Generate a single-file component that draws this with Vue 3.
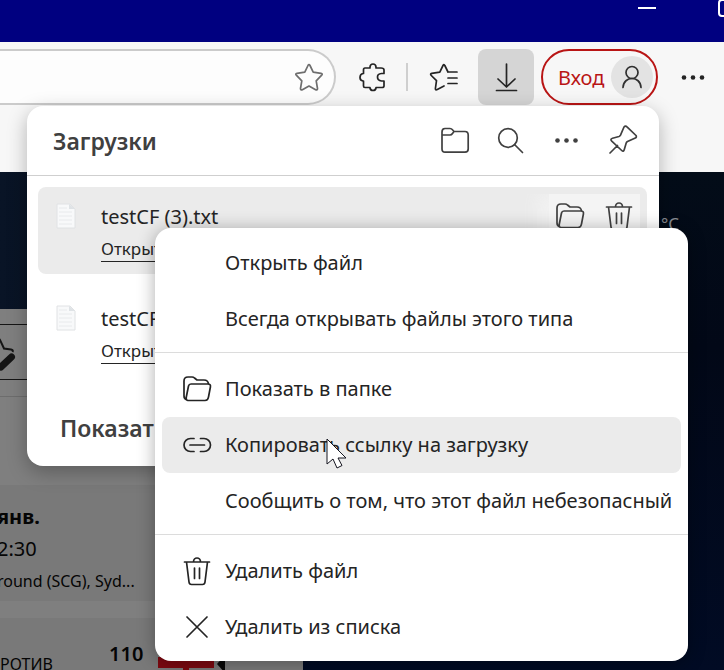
<script setup>
const files = [
  { name: 'testCF (3).txt', active: true },
  { name: 'testCF (2).txt', active: false }
]
const groups = [
  [
    { label: 'Открыть файл', icon: '' },
    { label: 'Всегда открывать файлы этого типа', icon: '' }
  ],
  [
    { label: 'Показать в папке', icon: 'folder' },
    { label: 'Копировать ссылку на загрузку', icon: 'link', hover: true },
    { label: 'Сообщить о том, что этот файл небезопасный', icon: '' }
  ],
  [
    { label: 'Удалить файл', icon: 'trash' },
    { label: 'Удалить из списка', icon: 'close' }
  ]
]
const paths = {
  folder: 'M4 25 Q1 24 1 21 V6 Q1 2 5 2 H9 Q10.500 2 11.500 3 L14 5 H21 Q25 5 25.500 9 M8 9 H25 Q28 9 27.400 12 L25.500 22 Q25 25.500 22 25.500 H5 Q2.800 25.500 3.300 22 L5.500 11 Q6 9 8 9 Z',
  link: 'M11 7.500 H7.500 A6.500 6.500 0 0 0 7.500 20.500 H11 M17.500 7.500 H21 A6.500 6.500 0 0 1 21 20.500 H17.500 M7 14 H21.500',
  trash: 'M1.500 5 H26.500 M3.500 5 L6 25 Q6.300 27.500 8.500 27.500 H19.500 Q21.700 27.500 22 25 L24.500 5 M10.500 5 A3.500 4 0 0 1 17.500 5 M11.500 11 V21.500 M16.500 11 V21.500',
  close: 'M4 4 L24 24 M24 4 L4 24'
}
</script>

<template>
  <div class="window">
    <header class="titlebar">
      <button class="caption" aria-label="Свернуть"><svg width="18" height="16" viewBox="0 0 18 16"><path d="M0 8 H18" /></svg></button>
      <button class="caption" aria-label="Развернуть"><svg width="18" height="18" viewBox="0 0 18 18"><rect x="1" y="0" width="16" height="16" rx="3" /></svg></button>
    </header>

    <nav class="toolbar">
      <div class="address">
        <input type="text" aria-label="Адресная строка" />
        <button class="plain" aria-label="Добавить в избранное">
          <svg class="icon muted" viewBox="0 0 28 28"><path d="M13 2.500 Q14 0.500 15 2.500 L18.200 9.200 L26 10.300 Q28 10.800 26.700 12.200 L21.200 17.800 L22.500 25.500 Q22.500 27.500 20.600 26.700 L14 23 L7.400 26.700 Q5.500 27.500 5.500 25.500 L6.800 17.800 L1.300 12.200 Q0 10.800 2 10.300 L9.800 9.200 Z" /></svg>
        </button>
      </div>
      <button class="tool" aria-label="Расширения">
        <svg class="icon" viewBox="0 0 28 28"><path d="M6 5 H11 V4 Q11.300 1 14 1 Q16.700 1 17 4 V5 H22 Q25 5 25 7 V10.500 H22.500 Q18.500 10.800 18.500 14 Q18.500 17.500 22.500 18 H25 V23 Q25 24.500 23 24.500 H17 V25 Q16.500 27.500 14 27.500 Q11.500 27.500 11 25 V24.500 H6 Q4.500 24.500 4.500 23 V18 H4 Q1 17.500 1 14.500 Q1 11 4 10.500 H4.500 V7 Q4.500 5 6 5 Z" /></svg>
      </button>
      <span class="divider"></span>
      <button class="tool" aria-label="Избранное">
        <svg class="icon" viewBox="0 0 28 28"><path d="M18 9 L14.800 2.500 Q14 0.500 13 2.500 L9.800 9.200 L1.800 10.400 Q-0.300 11 1.300 12.500 L6.500 17.600 L5.400 25.500 Q5.300 27.500 7.300 26.500 L14 23 M18 9 H27 M18 15 H27 M18 20.500 H27" /></svg>
      </button>
      <button class="tool pressed" aria-label="Загрузки">
        <svg class="icon" viewBox="0 0 28 28"><path d="M14.500 1 V23 M6 16 L14.500 24 L23 16 M4.500 27.500 H24.500" /></svg>
      </button>
      <button class="login">Вход
        <span class="avatar"><svg class="icon" viewBox="0 0 28 28"><circle cx="14" cy="9.500" r="6" /><path d="M5 24.500 C5.500 12.500 22.500 12.500 23 24.500" /></svg></span>
      </button>
      <button class="tool" aria-label="Настройки и другое">
        <svg class="icon dots" viewBox="0 0 28 28"><circle cx="5" cy="14.500" r="2.300" /><circle cx="14" cy="14.500" r="2.300" /><circle cx="23" cy="14.500" r="2.300" /></svg>
      </button>
    </nav>

    <main class="page">
      <div class="hero"><span>°C</span></div>
      <section class="feed">
        <div class="edit">
          <svg width="24" height="52" viewBox="0 0 24 52"><path class="star" d="M-2 12 L0 15 L4 23.500 L11 24.500 Q13.500 25 12.500 27" /><path class="pen" d="M1 42 L11.500 32" /></svg>
        </div>
        <article class="banner"></article>
        <article class="match">
          <strong>янв.</strong>
          <span>2:30</span>
          <small>round (SCG), Syd...</small>
        </article>
        <article class="score">
          <small>РОТИВ</small>
          <strong>110</strong>
          <svg class="flag" width="70" height="24" viewBox="0 0 70 24"><path class="red" d="M0 0 H56 V11 H31 V24 H25 V11 H0 Z M0 14 H22 V24 H0 Z M34 14 H56 V24 H34 Z" /><path class="tip" d="M59 7 L67 -2 V16 Z" /></svg>
        </article>
      </section>
    </main>

    <section class="popup">
      <header class="popup-head">
        <h1>Загрузки</h1>
        <button class="tool" aria-label="Открыть папку загрузок">
          <svg class="icon" viewBox="0 0 28 28"><path d="M4 1.500 H9 Q10.500 1.500 11.500 2.800 L13 4.500 H24 Q27.200 4.500 27.200 8 V22 Q27.200 25.200 24 25.200 H4 Q1 25.200 1 22 V5 Q1 1.500 4 1.500 Z M1 8 H9 Q10.500 8 11.500 6.500 L13 4.500" /></svg>
        </button>
        <button class="tool" aria-label="Поиск">
          <svg class="icon" viewBox="0 0 28 28"><circle cx="11" cy="11" r="9.300" /><path d="M17.500 17.500 L25.500 25.500" /></svg>
        </button>
        <button class="tool" aria-label="Дополнительно">
          <svg class="icon dots" viewBox="0 0 28 28"><circle cx="4.500" cy="13.500" r="2.300" /><circle cx="13.500" cy="13.500" r="2.300" /><circle cx="22.500" cy="13.500" r="2.300" /></svg>
        </button>
        <button class="tool" aria-label="Закрепить">
          <svg class="icon" viewBox="0 0 28 28"><path d="M1 26 L8.500 18.500 M15 0 Q16.500 -1.800 18 -0.200 L27 8.500 Q28 10.200 26.300 11 L18.500 14.500 Q17.500 15 17.200 16 L15.300 22.500 Q14.500 25.200 12.700 23.500 L2.500 13.800 Q1 12 3.500 11.200 L10 9.500 Q11 9.200 11.500 8.200 Z" /></svg>
        </button>
      </header>
      <ul class="files">
        <li v-for="file in files" :key="file.name" class="file" :class="{ active: file.active }">
          <svg class="doc" width="22" height="28" viewBox="0 0 22 28"><path class="sheet" d="M2 2 H15 L20 7 V26 H2 Z" /><path class="fold" d="M14 2 V7 H20 Z" /><path class="lines" d="M4 6 H12 M4 10 H17 M4 14 H17 M4 18 H17 M4 22 H17" /></svg>
          <div class="info">
            <span>{{ file.name }}</span>
            <a href="#">Открыть файл</a>
          </div>
          <div v-if="file.active" class="actions">
            <button class="plain" aria-label="Показать в папке"><svg class="icon" viewBox="0 0 28 28"><path :d="paths.folder" /></svg></button>
            <button class="plain" aria-label="Удалить файл"><svg class="icon" viewBox="0 0 28 28"><path :d="paths.trash" /></svg></button>
          </div>
        </li>
      </ul>
      <a class="more" href="#">Показать еще</a>
    </section>

    <div class="menu" role="menu">
      <div v-for="(group, i) in groups" :key="i" class="group">
        <button v-for="item in group" :key="item.label" class="item" :class="{ hover: item.hover }" role="menuitem">
          <svg class="icon" viewBox="0 0 28 28"><path v-if="item.icon" :d="paths[item.icon]" /></svg>
          <span>{{ item.label }}</span>
        </button>
      </div>
    </div>

    <svg class="cursor" width="22" height="32" viewBox="0 0 22 32"><path d="M1 2 V27 L7 22 L11 31 L16 28.500 L12 21 H20 Z" /></svg>
  </div>
</template>

<style>
body { overflow: hidden; }
</style>

<style scoped>
* { box-sizing: border-box; }
.window {
  position: relative;
  display: flex;
  flex-direction: column;
  height: 100vh;
  overflow: hidden;
  font-family: "Noto Sans", "Open Sans", sans-serif;
  font-size: 20px;
  color: #242424;
}
button { border: 0; padding: 0; background: none; font: inherit; color: inherit; }
a { color: inherit; text-decoration: none; }
.icon {
  display: block;
  flex: none;
  width: 28px;
  height: 28px;
  fill: none;
  stroke: currentColor;
  stroke-width: 1.7;
  stroke-linecap: round;
  stroke-linejoin: round;
  overflow: visible;
}
.dots { fill: currentColor; stroke: none; }
.plain { display: flex; align-items: center; justify-content: center; }
.muted { color: #6e6e6e; }

.titlebar {
  display: flex;
  justify-content: flex-end;
  flex: none;
  gap: 62px;
  height: 42px;
  margin-right: -12px;
  background: #000080;
}
.caption { height: 16px; }
.caption svg { display: block; fill: none; stroke: #fff; stroke-width: 2; }

.toolbar {
  display: flex;
  flex: none;
  height: 130px;
  padding: 7px 3px 0 0;
  background: #f7f7f7;
}
.address {
  display: flex;
  flex: 1;
  min-width: 0;
  height: 56px;
  margin-right: 9px;
  padding-right: 11px;
  border: 2px solid #cbcbcb;
  border-left: 0;
  border-radius: 0 28px 28px 0;
  background: #fdfdfd;
}
.address input { flex: 1; min-width: 0; border: 0; background: none; outline: 0; font: inherit; }
.tool { display: flex; flex: none; align-items: center; justify-content: center; width: 56px; height: 56px; border-radius: 8px; }
.divider { flex: none; width: 2px; height: 28px; margin: 14px 8px 0 5px; background: #cfcfcf; }
.pressed { margin: 0 7px 0 6px; background: #d5d5d5; }
.login {
  display: flex;
  flex: none;
  align-items: center;
  justify-content: space-between;
  width: 117px;
  height: 56px;
  margin-right: 7px;
  padding: 0 3px 0 15px;
  border: 2px solid #b91515;
  border-radius: 28px;
  color: #b91515;
}
.avatar { display: grid; place-items: center; width: 42px; height: 42px; border-radius: 50%; background: #e3e3e3; color: #303030; }

.page {
  flex: 1;
  min-height: 0;
  background: linear-gradient(180deg, #030c18, #020817 35%, #010b24);
}
.hero {
  height: 137px;
  padding: 40px 45px 0 0;
  background: linear-gradient(90deg, #091426, #030c18 50%, transparent 80%);
  color: #8c9096;
  font-size: 17px;
  text-align: right;
}
.feed { width: 303px; padding-top: 15px; overflow: hidden; background: #7f7f7f; color: #050505; }
.edit { height: 56px; border: solid #151515; border-width: 1px 0; }
.edit svg { display: block; fill: none; stroke: #151515; }
.star { stroke-width: 2; }
.pen { stroke-width: 7; stroke-linecap: round; }
.banner { height: 89px; margin-top: 16px; border-top: 1px solid #6d6d6d; }
.match { display: flex; flex-direction: column; height: 116px; padding: 16px 0 0; background: #797979; line-height: 32px; }
.match > * { margin-left: -3px; }
.match small { font-size: 16px; }
.score { display: flex; height: 70px; margin-top: 17px; background: #797979; line-height: 28px; }
.score small { width: 109px; padding-top: 32px; font-size: 16px; }
.score strong { width: 49px; padding-top: 22px; font-size: 20px; font-weight: 600; }
.flag { margin-top: 39px; }
.red { fill: #7d0910; }
.tip { fill: #080808; }

.popup {
  position: absolute;
  top: 106px;
  left: 27px;
  right: 65px;
  height: 360px;
  border-radius: 16px;
  background: #fff;
  box-shadow: 0 6px 20px rgba(0, 0, 0, 0.28);
}
.popup-head { display: flex; align-items: center; height: 70px; padding: 0 8px 0 26px; border-bottom: 1px solid #cfcfcf; color: #404040; }
h1 { flex: 1; margin: 0; font-size: 23px; font-weight: 600; line-height: 32px; }
.files { display: flex; flex-direction: column; gap: 15px; margin: 0; padding: 11px 12px 0 11px; list-style: none; }
.file { display: flex; height: 87px; padding: 14px 7px 0 17px; border-radius: 8px; }
.active { background: #ebebeb; }
.doc { flex: none; margin-top: 1px; }
.sheet { fill: #f8f9fa; stroke: #e0e2e4; }
.fold { fill: #dfe3e6; }
.lines { stroke: #e8eaec; }
.info { display: flex; flex: 1; flex-direction: column; align-items: flex-start; margin-left: 24px; line-height: 32px; }
.info a { margin-top: 4px; border-bottom: 1px solid #242424; font-size: 17px; line-height: 24px; }
.actions { display: flex; gap: 21px; height: 56px; margin-top: -7px; padding: 0 7px; background: #f4f4f4; box-shadow: -12px 0 14px #f1f1f1; color: #404040; clip-path: inset(0 0 0 -26px); }
.actions .plain { height: 44px; }
.more { display: block; padding: 36px 33px; color: #404040; font-size: 23px; font-weight: 600; line-height: 32px; }

.menu {
  position: absolute;
  top: 228px;
  left: 155px;
  right: 36px;
  padding: 7px 7px 6px;
  border-radius: 16px;
  background: #fff;
  box-shadow: 0 2px 18px rgba(0, 0, 0, 0.32);
}
.group + .group { margin: 5px -7px 0; padding: 8px 7px 0; border-top: 1px solid #dcdcdc; }
.item { display: flex; align-items: center; gap: 14px; width: 100%; height: 56px; padding-left: 21px; border-radius: 8px; text-align: left; white-space: nowrap; }
.item span { padding-bottom: 2px; }
.hover { background: #ebebeb; }
.cursor { position: absolute; left: 326px; top: 437px; fill: #fff; stroke: #15151f; stroke-width: 1; }
</style>
